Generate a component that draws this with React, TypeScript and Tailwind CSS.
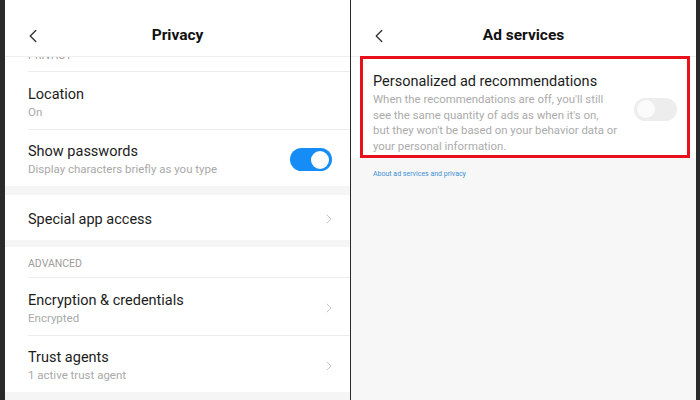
import { ChevronLeft, ChevronRight } from "lucide-react";

function Header({ title }: { title: string }) {
  return (
    <div className="grid h-[57px] shrink-0 grid-cols-[60px_1fr_60px] items-center border-b border-[#efefef] bg-white pt-[16px]">
      <div className="pl-[17px] text-[#333]">
        <ChevronLeft size={22} strokeWidth={1.5} />
      </div>
      <div className="text-center text-[15.5px] font-bold text-[#111]">{title}</div>
      <div />
    </div>
  );
}

function Toggle({ on }: { on: boolean }) {
  return on ? (
    <div className="flex h-[23px] w-[42px] items-center justify-end rounded-full bg-[#168cf7] pr-[3px]">
      <div className="h-[18px] w-[18px] rounded-full bg-white" />
    </div>
  ) : (
    <div className="flex h-[23px] w-[43px] items-center rounded-full bg-[#ededed] pl-[3px]">
      <div className="h-[18px] w-[18px] rounded-full bg-[#fbfbfb]" />
    </div>
  );
}

function Row({ title, sub, h, right }: { title: string; sub?: string; h: string; right?: React.ReactNode }) {
  return (
    <div className={`flex items-center justify-between bg-white pl-[23px] pr-[18px] pt-[3px] ${h}`}>
      <div className="flex flex-col">
        <span className="text-[14.5px] leading-[19px] text-[#1c1c1c]">{title}</span>
        {sub && <span className="mt-[1px] text-[11.5px] leading-[15px] text-[#a9a9a9]">{sub}</span>}
      </div>
      {right}
    </div>
  );
}

const chevron = <ChevronRight size={16} strokeWidth={1.3} className="-mr-[5px] text-[#bdbdbd]" />;

function Divider() {
  return (
    <div className="bg-white pl-[23px]">
      <div className="h-px bg-[#ededed]" />
    </div>
  );
}

export default function App() {
  return (
    <div className="flex h-[400px] w-[700px] overflow-hidden bg-[#2a2a2a]" style={{ fontFamily: "Roboto, 'Noto Sans', sans-serif" }}>
      <div className="ml-[5px] flex w-[345px] flex-col bg-[#f5f5f5]">
        <Header title="Privacy" />
        <div className="flex flex-1 flex-col overflow-hidden">
          <div className="h-[14px] overflow-hidden bg-white pl-[23px]">
            <div className="-mt-[9px] text-[10.5px] tracking-wide text-[#9a9a9a]">PRIVACY</div>
          </div>
          <Divider />
          <Row title="Location" sub="On" h="h-[57px]" />
          <Divider />
          <Row title="Show passwords" sub="Display characters briefly as you type" h="h-[56px]" right={<Toggle on />} />
          <div className="h-[9px] shrink-0" />
          <Row title="Special app access" h="h-[45px]" right={chevron} />
          <div className="h-[7px] shrink-0" />
          <div className="flex h-[30px] shrink-0 items-center bg-white pl-[23px] pt-[3px] text-[10.5px] text-[#9d9d9d]">ADVANCED</div>
          <Divider />
          <Row title="Encryption & credentials" sub="Encrypted" h="h-[57px]" right={chevron} />
          <Divider />
          <Row title="Trust agents" sub="1 active trust agent" h="h-[56px]" right={chevron} />
        </div>
      </div>
      <div className="ml-px flex w-[345px] flex-col bg-[#f7f7f7]">
        <Header title="Ad services" />
        <div className="flex bg-white pl-[9px] pr-[6px]">
          <div className="-mt-px flex w-full items-center justify-between border-[3px] border-[#e8101a] pb-0 pl-[10px] pr-[10px] pt-[13px]">
            <div className="flex flex-col">
              <span className="text-[14.5px] leading-[19px] text-[#1c1c1c]">Personalized ad recommendations</span>
              <span className="mt-[1px] whitespace-nowrap text-[11.4px] leading-[15.7px] text-[#ababab]">
                When the recommendations are off, you'll still
                <br />
                see the same quantity of ads as when it's on,
                <br />
                but they won't be based on your behavior data or
                <br />
                your personal information.
              </span>
            </div>
            <div className="mb-[8px]">
              <Toggle on={false} />
            </div>
          </div>
        </div>
        <div className="pl-[22px] pt-[11px] text-[7px] text-[#3d8fd4]">About ad services and privacy</div>
      </div>
    </div>
  );
}
